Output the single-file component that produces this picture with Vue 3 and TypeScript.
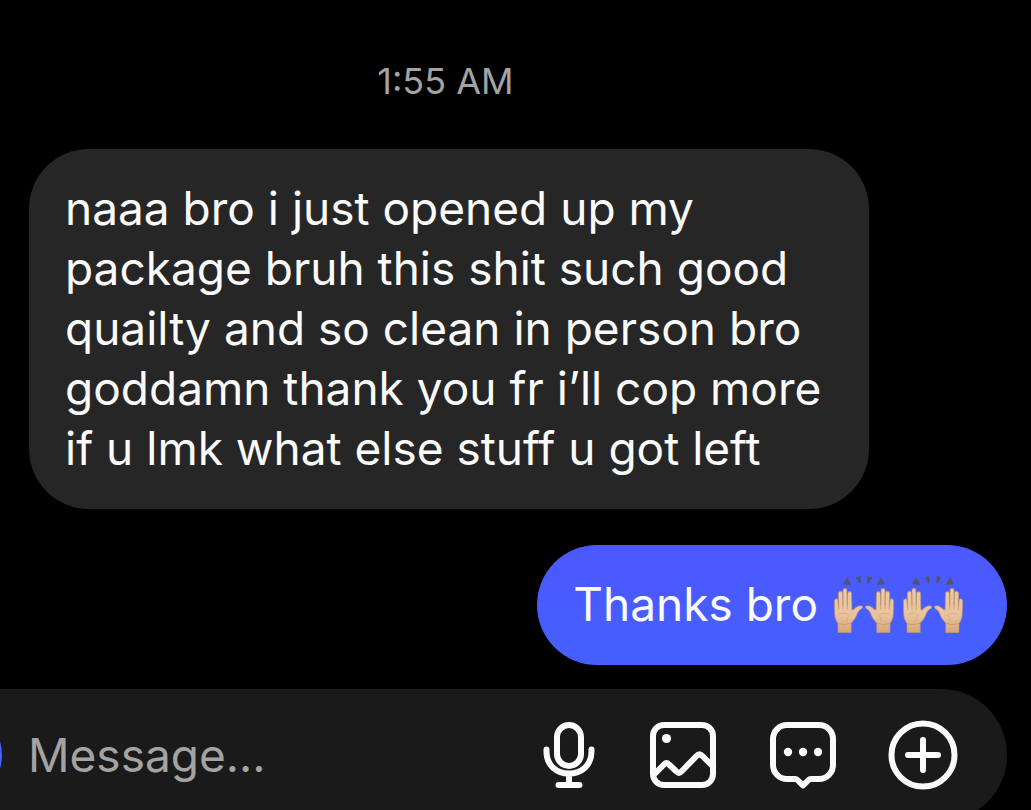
<script setup lang="ts">
import { ref } from 'vue'

interface Message {
  id: number
  mine: boolean
  text: string
  hands: number
}

const time = '1:55 AM'
const draft = ref('')
const messages: Message[] = [
  {
    id: 1,
    mine: false,
    text: 'naaa bro i just opened up my\npackage bruh this shit such good\nquailty and so clean in person bro\ngoddamn thank you fr i’ll cop more\nif u lmk what else stuff u got left',
    hands: 0,
  },
  { id: 2, mine: true, text: 'Thanks bro', hands: 2 },
]
</script>

<template>
  <main class="chat">
    <time class="stamp">{{ time }}</time>
    <section class="thread">
      <div v-for="m in messages" :key="m.id" class="bubble" :class="m.mine ? 'mine' : 'theirs'">
        <span>{{ m.text }}</span>
        <span v-if="m.hands" class="emojis">
          <svg v-for="n in m.hands" :key="n" class="emoji" viewBox="0 0 181 172" role="img" aria-label="Raising hands">
            <defs>
              <linearGradient :id="'skin' + n" x1="0" y1="0" x2="0" y2="1">
                <stop offset="0" stop-color="#ecc9a0" />
                <stop offset="0.6" stop-color="#e8c39c" />
                <stop offset="1" stop-color="#d6a67c" />
              </linearGradient>
              <g :id="'hand' + n">
                <path d="M27 25 39 4 53 27Z" fill="#51546a" />
                <path d="M65 3 80 1 80 24 74 19Z" fill="#51546a" />
                <path
                  d="M12 171 V143 C5 134 2 125 2 112 L1 75 Q2 69 7 69 Q12 69 12 75 L14 92 L13 53 Q14 46 20 46 Q26 46 26 53 L27 88 L27 43 Q28 37 33 37 Q39 37 39 43 L40 88 L41 53 Q42 47 47 47 Q53 47 53 53 L54 102 Q59 103 65 96 Q73 89 81 90 Q87 91 86 95 Q85 99 79 101 C71 106 68 124 60 133 L52 142 V171 Z"
                  :fill="`url(#skin${n})`"
                  stroke="#b98e72"
                  stroke-width="2"
                  stroke-linejoin="round"
                />
                <path d="M14 90V102M27 87V100M40 87V101" stroke="#c3936c" stroke-width="2" />
                <path d="M14 116Q31 107 46 119M37 139Q39 124 50 116" fill="none" stroke="#d1a47b" stroke-width="2" />
                <path d="M13 144Q31 150 51 143" fill="none" stroke="#cb9c73" stroke-width="3" />
              </g>
            </defs>
            <use :href="'#hand' + n" />
            <use :href="'#hand' + n" transform="translate(181 0) scale(-1 1)" />
          </svg>
        </span>
      </div>
    </section>

    <form class="composer" @submit.prevent>
      <button type="button" class="camera" aria-label="Camera"></button>
      <input v-model="draft" class="field" type="text" placeholder="Message..." aria-label="Message" />
      <button type="button" class="tool" aria-label="Voice message">
        <svg viewBox="0 0 72 72">
          <rect x="30" y="6" width="24" height="41" rx="12" />
          <path d="M19.500 30.500V32.500C19.500 46.500 29.500 54.500 42 54.500S64.500 46.500 64.500 32.500V30.500M42 55V66M31.500 66H52.500" />
        </svg>
      </button>
      <button type="button" class="tool" aria-label="Photo">
        <svg viewBox="0 0 72 72">
          <rect x="6" y="6" width="60" height="60" rx="11" />
          <circle class="dot" cx="19.500" cy="19.500" r="4.600" />
          <path d="M7 55.500 17 45.500Q19.500 43 22 45.500L29.500 52.500Q32 55 34.500 52.500L49.500 37Q52.500 34 55.500 37L66 47.500" />
        </svg>
      </button>
      <button type="button" class="tool" aria-label="Quick reply">
        <svg viewBox="0 0 72 72">
          <path d="M20 6H52A14 14 0 0 1 66 20V46A14 14 0 0 1 52 60H44Q42.500 60 41.500 61L36 66.500 30.500 61Q29.500 60 28 60H20A14 14 0 0 1 6 46V20A14 14 0 0 1 20 6Z" />
          <circle class="dot" cx="21" cy="33" r="4.200" />
          <circle class="dot" cx="36" cy="33" r="4.200" />
          <circle class="dot" cx="51" cy="33" r="4.200" />
        </svg>
      </button>
      <button type="button" class="tool" aria-label="More">
        <svg viewBox="0 0 72 72">
          <circle cx="36" cy="36" r="31.500" />
          <path d="M36 21V51M21 36H51" />
        </svg>
      </button>
    </form>
  </main>
</template>

<style>
body {
  margin: 0;
  background: #000;
}
</style>

<style scoped>
.chat {
  box-sizing: border-box;
  height: 100vh;
  overflow: hidden;
  display: flex;
  flex-direction: column;
  padding: 56px 24px 0 0;
  background: #000;
  color: #fafafa;
  font-family: Inter, "Liberation Sans", sans-serif;
}
.stamp {
  margin-right: 116px;
  text-align: center;
  font-size: 36px;
  line-height: 50px;
  color: #a3a3a3;
}
.thread {
  display: flex;
  flex-direction: column;
  gap: 36px;
  margin-top: 43px;
  padding-left: 29px;
}
.bubble {
  box-sizing: border-box;
  padding: 29px 36px 31px;
  border-radius: 60px;
  font-size: 46px;
  line-height: 60px;
  white-space: pre-line;
}
.theirs {
  align-self: flex-start;
  width: 840px;
  max-width: 100%;
  background: #262626;
}
.mine {
  align-self: flex-end;
  display: flex;
  align-items: center;
  gap: 16px;
  padding-right: 44px;
  background: linear-gradient(#4c58ff, #4560ff);
}
.emojis {
  display: flex;
  gap: 9px;
}
.emoji {
  display: block;
  width: 60px;
  height: 57px;
}
.composer {
  flex: none;
  box-sizing: border-box;
  display: flex;
  align-items: center;
  gap: 48px;
  height: 132px;
  margin-top: 24px;
  padding-right: 48px;
  border-radius: 0 66px 66px 0;
  background: #1a1a1a;
}
button {
  flex: none;
  padding: 0;
  border: 0;
  background: none;
}
.camera {
  width: 96px;
  height: 96px;
  margin-left: -94px;
  margin-right: -22px;
  border-radius: 50%;
  background: #4560ff;
}
.field {
  flex: 1;
  min-width: 0;
  height: 72px;
  padding: 0;
  border: 0;
  outline: 0;
  background: none;
  color: #fafafa;
  font: inherit;
  font-size: 46px;
}
.field::placeholder {
  color: #a3a3a3;
  opacity: 1;
}
.tool {
  width: 72px;
  height: 72px;
}
.tool svg {
  display: block;
  width: 72px;
  height: 72px;
  fill: none;
  stroke: #fafafa;
  stroke-width: 6;
  stroke-linecap: round;
  stroke-linejoin: round;
}
.tool .dot {
  fill: #fafafa;
  stroke: none;
}
</style>
